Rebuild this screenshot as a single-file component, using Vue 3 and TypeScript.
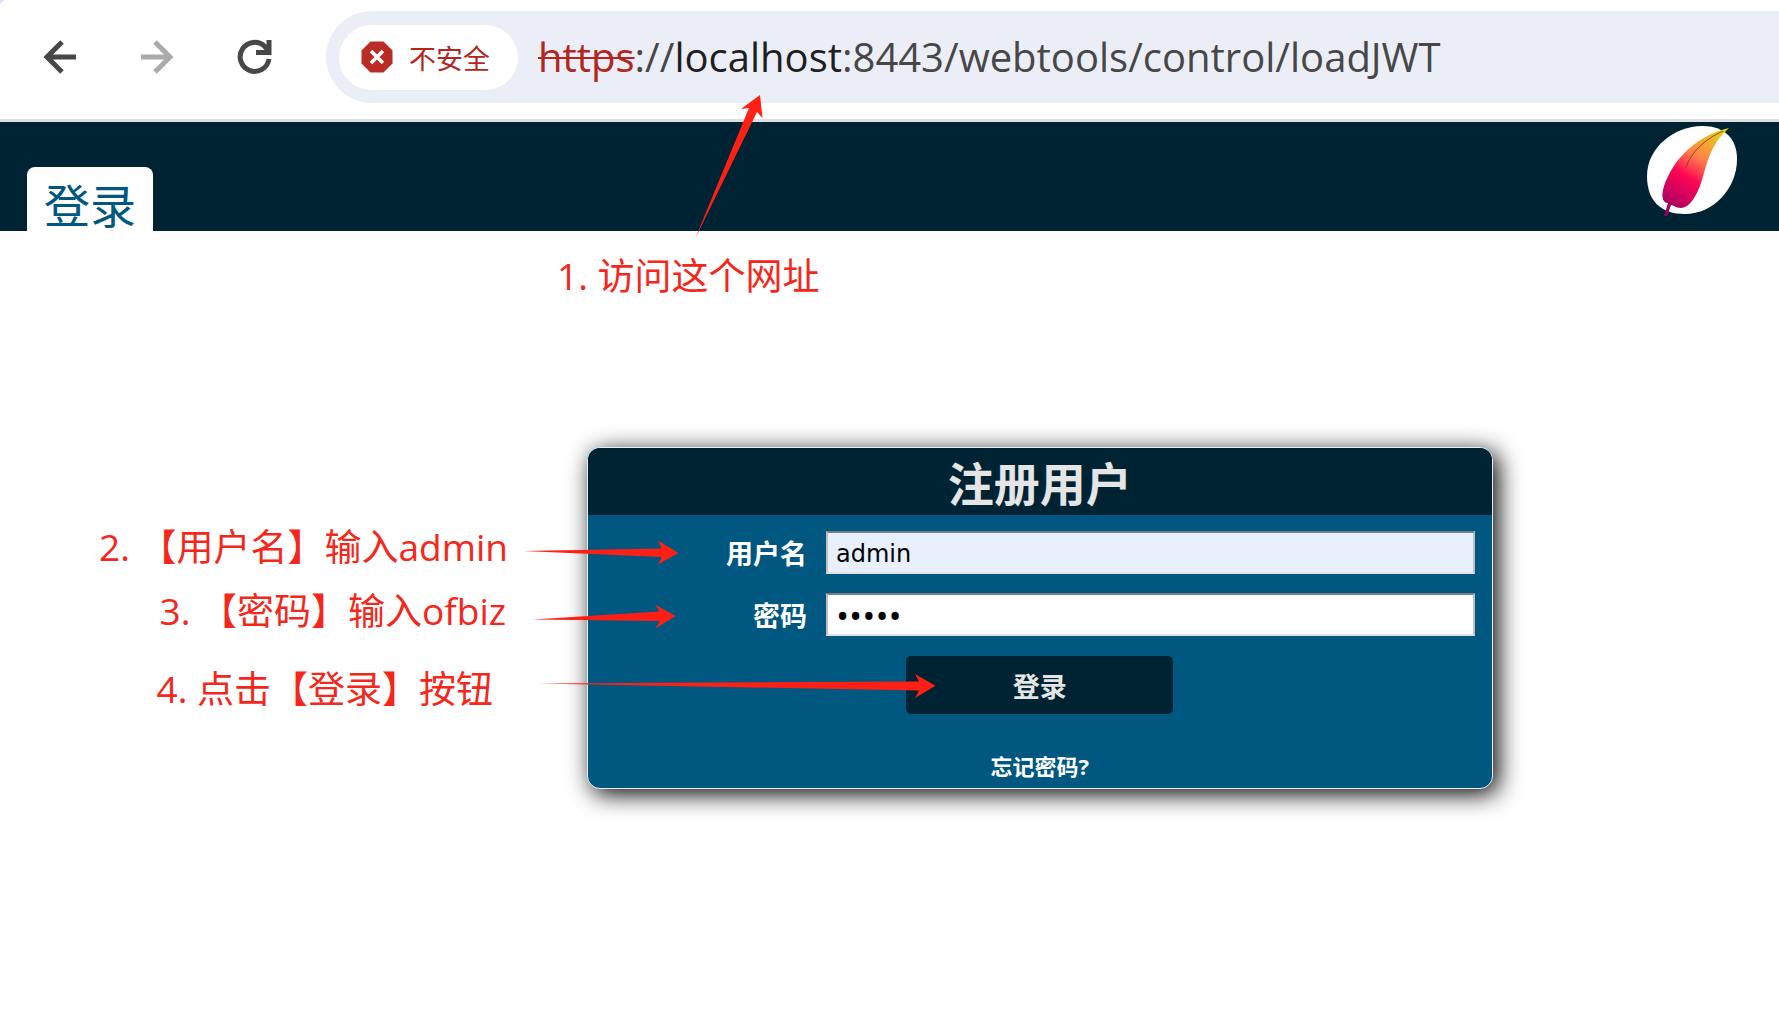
<script setup lang="ts">
import { ref } from 'vue'

const username = ref('admin')
const password = ref('ofbiz')
</script>

<template>
  <div class="window">
    <nav class="toolbar" aria-label="浏览器">
      <button class="tool" type="button" aria-label="后退">
        <svg viewBox="0 0 36 36" width="36" height="36" fill="none" stroke="#474747" stroke-width="5">
          <path d="M34 18H5M20 3L5 18l15 15" />
        </svg>
      </button>
      <button class="tool" type="button" aria-label="前进" disabled>
        <svg viewBox="0 0 36 36" width="36" height="36" fill="none" stroke="#ababab" stroke-width="5">
          <path d="M2 18h29M16 3l15 15-15 15" />
        </svg>
      </button>
      <button class="tool" type="button" aria-label="重新加载">
        <svg viewBox="0 0 36 36" width="36" height="36" fill="none" stroke="#474747" stroke-width="5">
          <path d="M33 20A14.500 14.500 0 1 1 29 7.700L33 12M20 13.500H33V1" />
        </svg>
      </button>
      <div class="omnibox">
        <button class="security" type="button">
          <svg viewBox="0 0 32 32" width="32" height="32">
            <path d="M9.500 0.500h13l9 9v13l-9 9h-13l-9-9v-13z" fill="#ba2c25" />
            <path d="M10 10l12 12M22 10L10 22" stroke="#fff" stroke-width="3.600" />
          </svg>
          <span>不安全</span>
        </button>
        <div class="url"><s>https</s>://<b>localhost</b>:8443/webtools/control/loadJWT</div>
      </div>
    </nav>

    <header class="masthead">
      <a class="tab" href="#login">登录</a>
      <svg class="logo" viewBox="0 0 90 92" width="90" height="92" role="img" aria-label="OFBiz">
        <defs>
          <linearGradient id="feather" x1="80" y1="4" x2="24" y2="90" gradientUnits="userSpaceOnUse">
            <stop offset="0" stop-color="#dfd80c" />
            <stop offset="0.200" stop-color="#f3ae2c" />
            <stop offset="0.380" stop-color="#ff8048" />
            <stop offset="0.600" stop-color="#ff0753" />
            <stop offset="0.820" stop-color="#c80060" />
            <stop offset="1" stop-color="#910066" />
          </linearGradient>
        </defs>
        <path d="M0 51C0 22 28 1 55 1C78 1 90 14 90 34C90 64 66 89 38 89C14 89 0 76 0 51Z" fill="#fff" />
        <path d="M82 3C62 7 38 22 25 44C18 56 15 65 15.500 72C16 76 18 78 21 78L17 91H20L24 80C27 80 28 83 34 83C41 83 49 74 55 55C60 38 64 20 78 7Z" fill="url(#feather)" />
        <path d="M76 6C58 14 43 28 39 43" fill="none" stroke="#8a4a20" stroke-width="1" />
      </svg>
      <p class="note visit">1. 访问这个网址</p>
      <svg class="visit-arrow" viewBox="0 0 70 146" width="70" height="146" aria-hidden="true">
        <path d="M1 145L55 14L47 15L66 1L68.500 24L63 18Z" fill="#ff2015" />
      </svg>
    </header>

    <main class="page">
      <form id="login" class="card" @submit.prevent>
        <h1>注册用户</h1>
        <div class="fields">
          <label for="user">用户名</label>
          <input id="user" v-model="username" class="filled" type="text" />
          <label for="pass">密码</label>
          <input id="pass" v-model="password" type="password" />
        </div>
        <button class="submit" type="submit">登录</button>
        <a class="forgot" href="#forgot">忘记密码?</a>

        <p class="note user-note">2. 【用户名】输入admin</p>
        <p class="note pass-note">3. 【密码】输入ofbiz</p>
        <p class="note submit-note">4. 点击【登录】按钮</p>
        <svg class="arrows" viewBox="0 0 420 168" width="420" height="168" aria-hidden="true">
          <g fill="#ff2015">
            <path d="M3 15L141.500 12.500L138 4.500L158.500 17L138 28.500L142 21Z" />
            <path d="M13 83.500L139.500 75.500L135 68.500L155.500 80L135.500 92.500L140 85Z" />
            <path d="M18 147.500L399 145.500L395 138L415.500 149.700L395 162L399 154.500Z" />
          </g>
        </svg>
      </form>
    </main>
  </div>
</template>

<style>
body {
  margin: 0;
  background: #fff;
}
</style>

<style scoped>
.window {
  min-height: 100vh;
  background: #fff;
  font-family: "Open Sans", "Noto Sans CJK SC", sans-serif;
}
.toolbar {
  display: flex;
  align-items: center;
  box-sizing: border-box;
  height: 122px;
  padding: 11px 0 16px 42px;
  gap: 61px;
  border-bottom: 3px solid #dfe1e1;
  background: radial-gradient(circle at 18px 18px, #fff 22px, #d3e3fd 23px) 0 0 / 12px 12px no-repeat, #fff;
}
button {
  font: inherit;
  border: 0;
  padding: 0;
}
.tool {
  display: flex;
  background: none;
}
.omnibox {
  display: flex;
  align-items: center;
  flex: 1;
  height: 92px;
  gap: 20px;
  padding-left: 13px;
  margin-left: -7px;
  border-radius: 46px 0 0 46px;
  background: #ebeef7;
  white-space: nowrap;
}
.security {
  display: flex;
  align-items: center;
  gap: 16px;
  height: 65px;
  padding: 0 28px 0 22px;
  border-radius: 33px;
  background: #fff;
  color: #b3261e;
  font-size: 27px;
}
.url {
  padding-bottom: 2px;
  color: #474747;
  font-size: 40px;
}
.url s {
  color: #b3261e;
  text-decoration-thickness: 2px;
}
.url b {
  color: #1f1f1f;
  font-weight: 400;
}
.masthead {
  position: relative;
  display: flex;
  justify-content: space-between;
  box-sizing: border-box;
  height: 109px;
  padding: 3px 42px 0 27px;
  background: #002333;
}
.tab {
  align-self: flex-end;
  box-sizing: border-box;
  height: 64px;
  padding: 0 17px;
  border-radius: 8px 8px 0 0;
  background: #fff;
  color: #005880;
  font-size: 46px;
  line-height: 76px;
  text-decoration: none;
}
.note {
  position: absolute;
  margin: 0;
  color: #f5261a;
  font-size: 37px;
  line-height: 48px;
  white-space: nowrap;
}
.visit {
  left: 557px;
  top: 130px;
}
.visit-arrow {
  position: absolute;
  left: 694px;
  top: -28px;
}
.page {
  padding-top: 216px;
}
.card {
  position: relative;
  display: flex;
  flex-direction: column;
  align-items: center;
  box-sizing: border-box;
  width: 50.9%;
  margin-left: 33%;
  padding-bottom: 10px;
  border: 1px solid #e5f0f5;
  border-radius: 13px;
  background: #005880;
  box-shadow: 5px 5px 24px 0 #000;
}
h1 {
  align-self: stretch;
  box-sizing: border-box;
  height: 67px;
  margin: 0;
  border-radius: 12px 12px 0 0;
  background: #002333;
  color: #e5e5e5;
  font-size: 46px;
  line-height: 70px;
  text-align: center;
}
.fields {
  display: grid;
  grid-template-columns: 27fr 80fr;
  align-self: stretch;
  align-items: center;
  gap: 19px;
  padding: 16px 17px 20px 0;
}
label {
  height: 43px;
  color: #fff;
  font-size: 27px;
  font-weight: 700;
  line-height: 46px;
  text-align: right;
}
input {
  box-sizing: border-box;
  width: 100%;
  min-width: 0;
  height: 43px;
  padding: 2px 8px 0;
  border: 2px solid;
  border-color: #767f86 #bcc0c2 #e0e2e3 #bcc0c2;
  background: #fff;
  color: #000;
  font-family: "DejaVu Sans", sans-serif;
  font-size: 24px;
}
input[type="password"] {
  font-family: "Open Sans", sans-serif;
  font-size: 35px;
}
.filled {
  background: #e8f0fe;
}
.submit {
  width: 267px;
  height: 58px;
  border-radius: 5px;
  background: #002333;
  color: #e5e5e5;
  font-size: 27px;
  font-weight: 700;
}
.forgot {
  margin-top: 40px;
  color: #fff;
  font-size: 22px;
  font-weight: 700;
  line-height: 24px;
  text-decoration: none;
}
.user-note {
  right: calc(100% + 80px);
  top: 75px;
}
.pass-note {
  right: calc(100% + 82px);
  top: 139px;
}
.submit-note {
  right: calc(100% + 95px);
  top: 217px;
}
.arrows {
  position: absolute;
  left: -68px;
  top: 88px;
}
</style>
